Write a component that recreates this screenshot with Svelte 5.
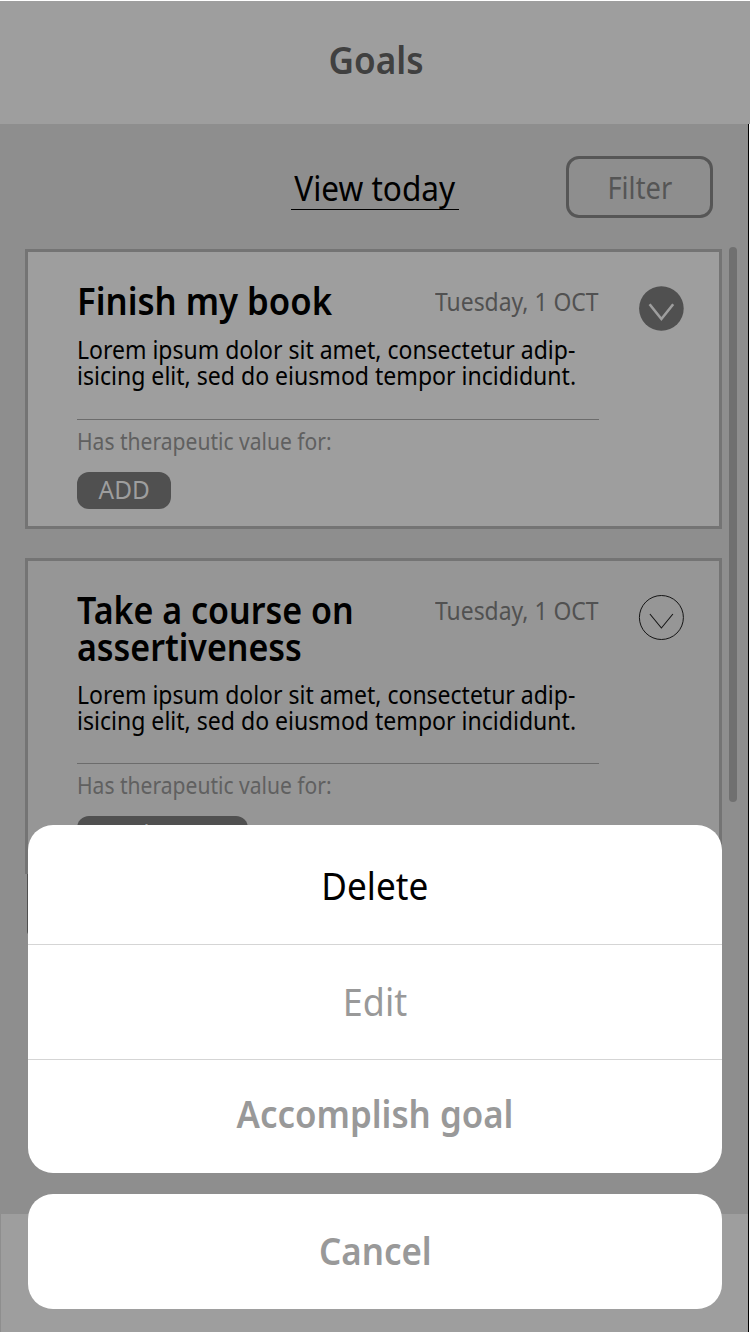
<script>
  const goals = [
    {
      title: [{ text: 'Finish my book', sx: 0.938 }],
      date: 'Tuesday, 1 OCT',
      tag: { text: 'ADD', sx: 0.977 },
      filled: true
    },
    {
      title: [{ text: 'Take a course on', sx: 0.919 }, { text: 'assertiveness', sx: 0.918 }],
      date: 'Tuesday, 1 OCT',
      tag: { text: 'Work stress', sx: 0.93 },
      filled: false
    }
  ];
  const description = [
    { text: 'Lorem ipsum dolor sit amet, consectetur adip-', sx: 0.938 },
    { text: 'isicing elit, sed do eiusmod tempor incididunt.', sx: 0.941 }
  ];
</script>

{#snippet label(text, sx)}<span class="label" style="transform: scaleX({sx})">{text}</span>{/snippet}

<div class="screen">
  <header><h1>{@render label('Goals', 0.95)}</h1></header>

  <main>
    <div class="toolbar">
      <span class="today">{@render label('View today', 0.928)}</span>
      <button class="filter">{@render label('Filter', 0.88)}</button>
    </div>

    <div class="content">
      <div class="list">
        {#each goals as goal, i}
          <article class:second={i === 1}>
            <div class="top">
              <h2>
                {#each goal.title as line}<span class="line">{@render label(line.text, line.sx)}</span>{/each}
              </h2>
              <span class="date">{@render label(goal.date, 0.916)}</span>
            </div>
            <svg class="toggle" viewBox="0 0 47 47" fill="none">
              {#if goal.filled}
                <circle cx="23.4" cy="23.5" r="22.3" fill="#505050" />
                <path d="M11.6 19.2 23.4 34 35.2 19.2" stroke="#9e9e9e" stroke-width="2.6" />
              {:else}
                <circle cx="23.4" cy="23.5" r="22" stroke="#151515" />
                <path d="M11.9 20 23.4 34 34.9 20" stroke="#151515" stroke-width="1.1" />
              {/if}
            </svg>
            <div class="description">
              {#each description as line}<span class="line">{@render label(line.text, line.sx)}</span>{/each}
            </div>
            <div class="value">{@render label('Has therapeutic value for:', 0.896)}</div>
            <span class="tag">{@render label(goal.tag.text, goal.tag.sx)}</span>
          </article>
        {/each}
      </div>
      <div class="scrollbar"></div>
    </div>
  </main>

  <footer></footer>

  <div class="peek"></div>
  <div class="sheet">
    <div class="actions">
      <button class="delete">{@render label('Delete', 0.925)}</button>
      <button class="edit">{@render label('Edit', 0.945)}</button>
      <button class="accomplish">{@render label('Accomplish goal', 0.917)}</button>
    </div>
    <button class="cancel">{@render label('Cancel', 0.918)}</button>
  </div>
</div>

<style>
  :global(body) { background: #fff; }
  * { box-sizing: border-box; }
  .screen {
    position: relative;
    display: flex;
    flex-direction: column;
    width: 750px;
    height: 1332px;
    padding-top: 1px;
    overflow: hidden;
    font-family: 'Noto Sans', 'Open Sans', sans-serif;
    color: #000;
  }
  .label { display: inline-block; white-space: nowrap; transform-origin: center; }
  h1, h2 { margin: 0; font-weight: 600; }
  button { border: 0; margin: 0; padding: 0; background: none; font-family: inherit; color: inherit; }
  header {
    flex: 0 0 123px;
    display: flex;
    justify-content: center;
    background: #9e9e9e;
    color: #404040;
  }
  h1 { padding-left: 2px; font-size: 37px; line-height: 50px; margin-top: 34px; }
  main {
    flex: 0 0 1090px;
    width: 749px;
    border-right: 1px solid #000;
    background: #8e8e8e;
    overflow: hidden;
  }
  .toolbar {
    display: grid;
    grid-template-columns: 168px 147px;
    column-gap: 107px;
    padding: 32px 0 0 291px;
    height: 125px;
    align-items: start;
  }
  .today {
    display: flex;
    justify-content: center;
    height: 54px;
    border-bottom: 1px solid #000;
    font-size: 34px;
    line-height: 64px;
  }
  .filter {
    height: 62px;
    border: 3px solid #565656;
    border-radius: 13px;
    color: #555;
    font-size: 31px;
    line-height: 54px;
  }
  .content { display: flex; }
  .list { width: 697px; margin-left: 25px; display: flex; flex-direction: column; gap: 29px; }
  article {
    position: relative;
    height: 280px;
    border: 3px solid #747474;
    padding: 28px 0 0 49px;
    background: #9e9e9e;
  }
  article.second { height: 316px; background: #969696; }
  .top { display: flex; justify-content: space-between; align-items: flex-start; width: 522px; height: 44px; }
  .second .top { height: 80px; }
  h2 { font-size: 37px; line-height: 37px; padding-top: 2px; }
  .line { display: block; }
  .line .label, .value .label { transform-origin: left center; }
  .date { color: #515151; font-size: 25px; line-height: 40px; margin-top: 1px; }
  .date .label { transform-origin: right center; }
  .toggle { position: absolute; left: 610px; top: 33px; width: 47px; height: 47px; }
  .description {
    width: 522px;
    height: 96px;
    padding-top: 13px;
    border-bottom: 1px solid #6c6c6c;
    font-size: 24.5px;
    line-height: 26px;
  }
  .second .description { height: 95px; }
  .value { color: #606060; font-size: 23.5px; line-height: 42px; height: 52px; }
  .tag {
    display: flex;
    justify-content: center;
    width: 94px;
    height: 37px;
    border-radius: 12px;
    background: #505050;
    color: #9e9e9e;
    font-size: 25px;
    line-height: 35px;
  }
  .second .tag { width: 171px; }
  .scrollbar { width: 8px; height: 555px; margin: -2px 0 0 7px; border-radius: 4px; background: #707070; }
  footer {
    flex: 1;
    width: 749px;
    border: solid;
    border-width: 0 1px;
    border-color: #8e8e8e #000 #8e8e8e #8e8e8e;
    background: #9e9e9e;
  }
  .peek { position: absolute; left: 27px; top: 874px; width: 4px; height: 61px; background: #505050; border-radius: 0 0 0 4px; }
  .sheet {
    position: absolute;
    left: 28px;
    top: 825px;
    width: 694px;
    display: flex;
    flex-direction: column;
    gap: 21px;
  }
  .sheet button { font-size: 38px; }
  .actions {
    display: grid;
    grid-template-rows: 120px 115px 113px;
    background: #fff;
    border-radius: 25px;
  }
  .delete, .edit { border-bottom: 1px solid #d5d5d5; }
  .sheet .edit { padding-bottom: 2px; }
  .sheet .accomplish { padding-bottom: 8px; }
  .sheet .cancel { padding-bottom: 4px; }
  .sheet .edit, .sheet .accomplish, .sheet .cancel { color: #999; }
  .sheet .accomplish, .sheet .cancel { font-weight: 600; }
  .cancel { height: 115px; background: #fff; border-radius: 25px; }
</style>
